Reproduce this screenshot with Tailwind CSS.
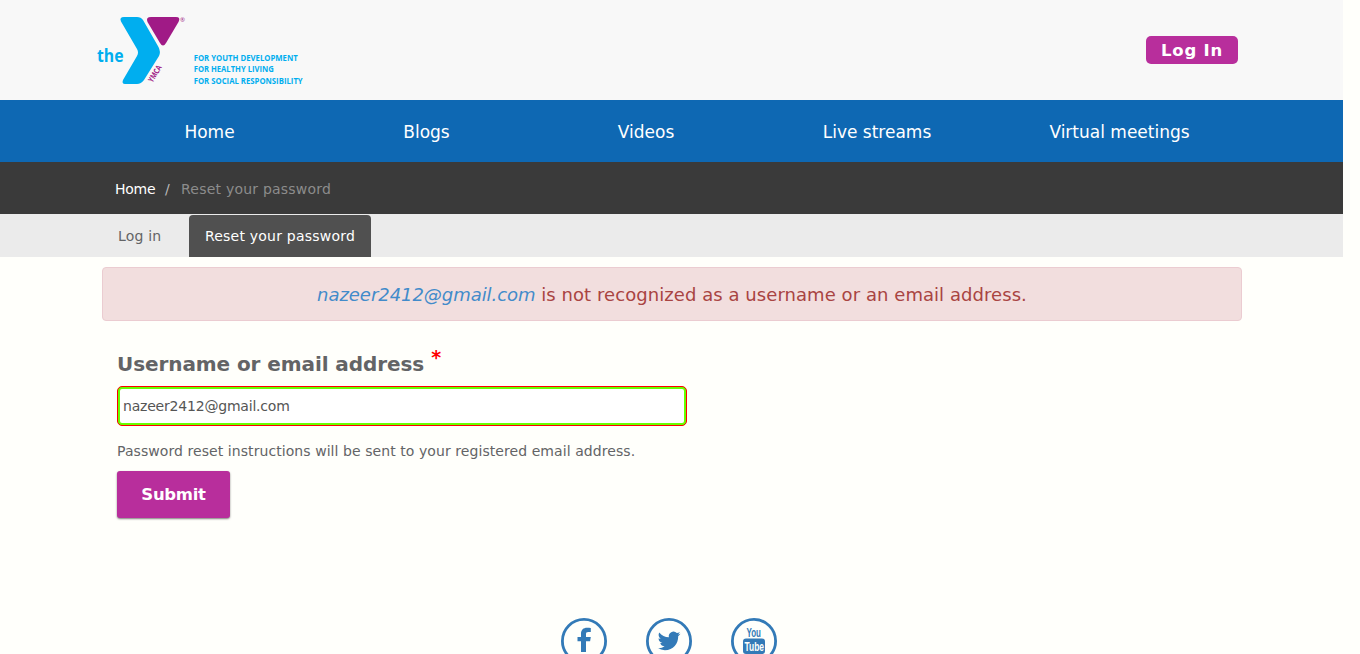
<!DOCTYPE html>
<html lang="en">
<head>
<meta charset="utf-8">
<title>Reset your password</title>
<script src="https://cdn.jsdelivr.net/npm/@tailwindcss/browser@4"></script>
</head>
<body class="bg-[#fffffb] h-[654px] overflow-hidden font-['Verdana','DejaVu_Sans',sans-serif] text-[14px] text-[#636466]">
<div class="w-[1343px]">
  <header class="h-[100px] bg-[#f8f8f8] flex justify-between pl-[90px] pr-[105px]">
    <svg class="mt-[10px]" width="230" height="84" viewBox="0 0 230 84">
      <path d="M34 7H47Q51 7 53 10L68.500 37Q71 42 69 46L54 70Q51 74 47 74H35Q31.500 74 33 70L47 46Q49 42.500 47 39L31 11.500Q29 7 34 7Z" fill="#00aeef"/>
      <path d="M61 7H86Q91 7 88.500 12L76 33Q73 38 70 33L57.500 12Q55.500 7 61 7Z" fill="#a01a86"/>
      <text x="7" y="52" font-family="Open Sans" font-weight="700" font-size="18" textLength="26.500" lengthAdjust="spacingAndGlyphs" fill="#00aeef">the</text>
      <text transform="translate(62.500 73) rotate(-59)" font-family="Open Sans" font-weight="700" font-size="8" textLength="18.500" lengthAdjust="spacingAndGlyphs" fill="#a01a86">YMCA</text>
      <text x="90" y="11.500" font-family="Open Sans" font-size="6" fill="#a01a86">®</text>
      <g font-family="Open Sans" font-weight="700" font-size="8.700" fill="#00aeef">
        <text x="103.700" y="51" textLength="104" lengthAdjust="spacingAndGlyphs">FOR YOUTH DEVELOPMENT</text>
        <text x="103.700" y="62.400" textLength="80" lengthAdjust="spacingAndGlyphs">FOR HEALTHY LIVING</text>
        <text x="103.700" y="73.900" textLength="109" lengthAdjust="spacingAndGlyphs">FOR SOCIAL RESPONSIBILITY</text>
      </g>
    </svg>
    <a class="mt-9 h-7 w-[92px] rounded-[5px] bg-[#b82e9c] text-white font-bold text-[16.5px] tracking-[0.8px] leading-[30px] text-center">Log In</a>
  </header>
  <nav class="h-[62px] bg-[#0e68b3] text-white text-[17px] leading-[64px] text-center flex whitespace-nowrap pl-[129.5px]">
    <a class="w-40">Home</a>
    <a class="w-40 ml-[57px]">Blogs</a>
    <a class="w-40 ml-[59.5px]">Videos</a>
    <a class="w-40 ml-[71px]">Live streams</a>
    <a class="w-40 ml-[82.5px]">Virtual meetings</a>
  </nav>
  <div class="h-[52px] bg-[#3a3a3a] pl-[115px] leading-[54px] flex">
    <a class="text-white w-[50px] tracking-[-0.25px]">Home</a><span class="w-4 text-[#bbb]">/</span><span class="text-[#8c8c8c] tracking-[0.22px]">Reset your password</span>
  </div>
  <div class="h-[43px] bg-[#ebebeb] pl-[118px] pt-px leading-[42px] flex">
    <a class="w-[71px] tracking-[0.17px]">Log in</a>
    <a class="w-[182px] h-[42px] bg-[#505050] text-white rounded-t-[4px] text-center tracking-[0.22px]">Reset your password</a>
  </div>
  <main>
    <div class="ml-[102px] mt-[10px] w-[1140px] h-[54px] rounded-[4px] border border-[#ebccd1] bg-[#f2dede] text-[#a94442] text-[18px] leading-[53px] text-center"><em class="text-[#428bca] tracking-[-0.05px]">nazeer2412@gmail.com</em><span class="tracking-[0.06px]"> is not recognized as a username or an email address.</span></div>
    <div class="pl-[117px] pt-[29px]">
      <label class="flex h-[36px] leading-[28px] text-[20px] font-bold tracking-[-0.08px]">Username or email address<span class="text-[#f00] ml-[7px] -mt-[7px] text-[19px]">*</span></label>
      <div class="w-[570px] h-10 rounded-[5px] border border-[#f00] bg-[#6f0] p-[2px]"><div class="h-full bg-white rounded-[2px] pl-[3px] leading-[34px] text-[#555] tracking-[-0.2px]">nazeer2412@gmail.com</div></div>
      <p class="mt-[15px] h-[30px] leading-5 tracking-[0.07px]">Password reset instructions will be sent to your registered email address.</p>
      <button class="block w-[113px] h-[47px] rounded-[3px] bg-[#b82e9c] text-white font-bold text-[16.5px] tracking-[-0.3px] leading-[48px] shadow-[0_1px_2px_rgba(0,0,0,0.5)]">Submit</button>
    </div>
    <div class="mt-[100px] ml-[561px] flex gap-[39px] text-[#337ab7]">
      <svg width="46" height="46" viewBox="0 0 46 46"><circle cx="23" cy="23" r="21.6" fill="none" stroke="currentColor" stroke-width="2.8"/><path d="M29.8 10v4.1h-2.5c-2 0-2.3.9-2.3 2.2v2.6h4.8l-.7 4.4H25V34h-5V23.3h-3.500v-4.400H20v-3.100c0-3.900 2.400-6 6-6 1.700 0 3.200.1 3.800.2z" fill="currentColor"/></svg>
      <svg width="46" height="46" viewBox="0 0 46 46"><circle cx="23" cy="23" r="21.600" fill="none" stroke="currentColor" stroke-width="2.800"/><path transform="translate(11.700 11.500) scale(.95)" d="M23.950 4.570a10 10 0 0 1-2.820.770 4.960 4.960 0 0 0 2.160-2.720c-.950.550-2 .950-3.130 1.180a4.920 4.920 0 0 0-8.380 4.480C7.690 8.090 4.070 6.130 1.640 3.160a4.820 4.820 0 0 0-.670 2.480c0 1.710.87 3.210 2.190 4.100a4.900 4.900 0 0 1-2.230-.620v.060a4.920 4.920 0 0 0 3.950 4.830 5 5 0 0 1-2.210.080 4.940 4.940 0 0 0 4.600 3.420A9.870 9.870 0 0 1 0 19.540a14 14 0 0 0 7.550 2.210c9.050 0 14-7.500 14-13.980 0-.210 0-.420-.020-.630a9.940 9.940 0 0 0 2.460-2.550z" fill="currentColor"/></svg>
      <svg width="46" height="46" viewBox="0 0 46 46"><circle cx="23" cy="23" r="21.600" fill="none" stroke="currentColor" stroke-width="2.800"/><rect x="12" y="20.500" width="22" height="15.500" rx="3" fill="currentColor"/><g font-family="Liberation Sans" font-weight="700"><text x="15.500" y="19" font-size="13" textLength="14.500" lengthAdjust="spacingAndGlyphs" fill="currentColor">You</text><text x="13.500" y="33" font-size="12" textLength="19.500" lengthAdjust="spacingAndGlyphs" fill="#fffffb">Tube</text></g></svg>
    </div>
  </main>
</div>
</body>
</html>
